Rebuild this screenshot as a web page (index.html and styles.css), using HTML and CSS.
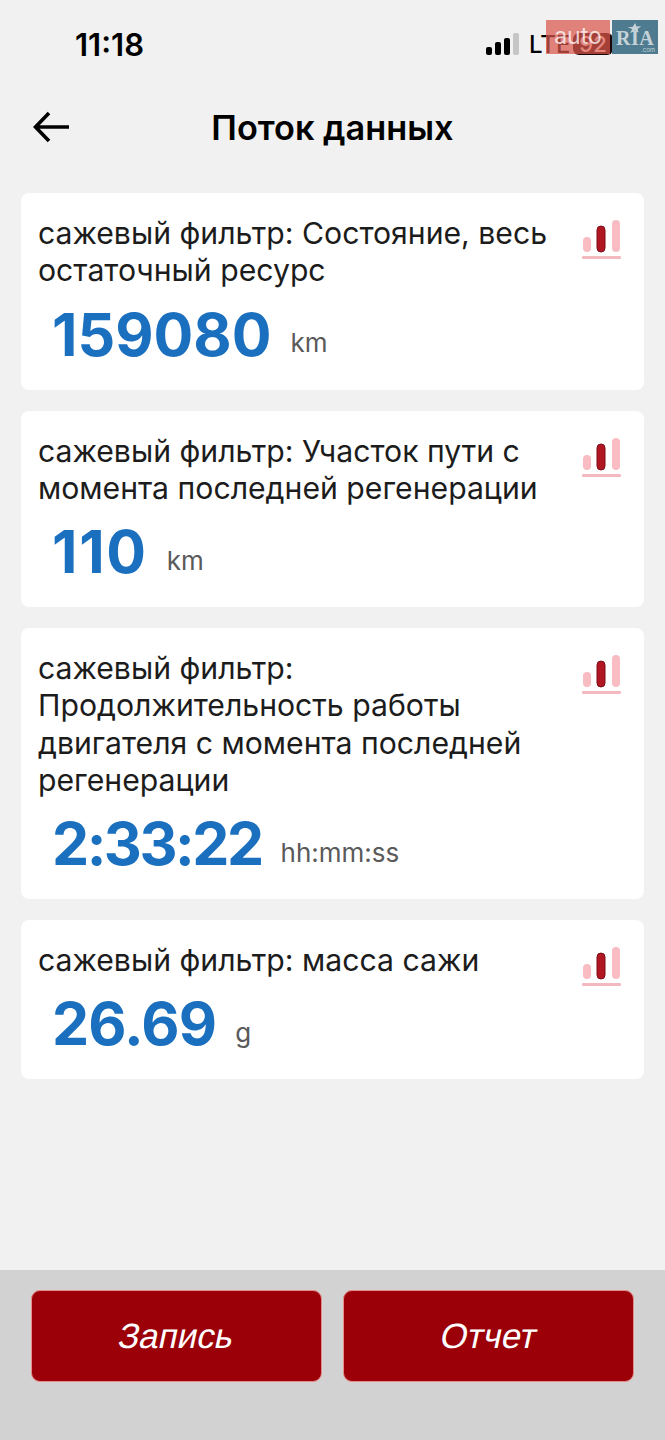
FILE: index.html
```html
<!DOCTYPE html>
<html lang="en">
<head>
    <meta charset="UTF-8">
    <title>Поток данных</title>
    <link rel="stylesheet" href="styles.css">
</head>
<body>
    <div class="page">
        <!-- Status bar -->
        <div class="status">
            <span class="time">11:18</span>
            <div class="status-right">
                <svg class="signal" width="34" height="22" viewBox="0 0 34 22">
                    <rect x="0" y="14" width="6" height="8" rx="2" fill="#000"/>
                    <rect x="9" y="9" width="6" height="13" rx="2" fill="#000"/>
                    <rect x="18" y="5" width="6" height="17" rx="2" fill="#000"/>
                    <rect x="27" y="0" width="6" height="22" rx="2" fill="#c6c6c6"/>
                </svg>
                <span class="lte">LTE</span>
                <span class="battery">92</span>
            </div>
        </div>

        <!-- Watermark -->
        <div class="watermark">
            <div class="wm-auto">auto</div>
            <div class="wm-ria">
                <svg class="wm-star" width="15" height="11" viewBox="0 0 18 14">
                    <path d="M10 0l1.500 4.500 6-.5-4.500 3.500 1 5-4.500-3-6 3.500 2.500-5.500L0 5l6.500 0z" fill="#c4d2d8"/>
                </svg>
                <span class="wm-ria-text">RIA</span>
                <span class="wm-com">.com</span>
            </div>
        </div>

        <!-- Header -->
        <div class="header">
            <svg class="back" width="38" height="32" viewBox="0 0 38 32">
                <path d="M36 16H3M16 2L2.500 16 16 30" fill="none" stroke="#000" stroke-width="3.600"/>
            </svg>
            <h1>Поток данных</h1>
        </div>

        <!-- Data cards -->
        <div class="cards">
            <div class="card">
                <div class="card-top">
                    <div class="card-title">сажевый фильтр: Состояние, весь остаточный ресурс</div>
                    <svg class="chart" width="40" height="40" viewBox="0 0 40 40">
                        <rect x="2" y="17" width="8" height="15" rx="4" fill="#f8bcc2"/>
                        <rect x="16" y="6" width="8" height="26" rx="4" fill="#b01722" stroke="#7d0d15"/>
                        <rect x="31" y="0" width="8" height="32" rx="4" fill="#f8bcc2"/>
                        <rect x="1" y="36" width="39" height="3" rx="1" fill="#f3b8c0"/>
                    </svg>
                </div>
                <div class="reading">
                    <span class="value">159080</span>
                    <span class="unit">km</span>
                </div>
            </div>
            <div class="card">
                <div class="card-top">
                    <div class="card-title">сажевый фильтр: Участок пути с момента последней регенерации</div>
                    <svg class="chart" width="40" height="40" viewBox="0 0 40 40">
                        <rect x="2" y="17" width="8" height="15" rx="4" fill="#f8bcc2"/>
                        <rect x="16" y="6" width="8" height="26" rx="4" fill="#b01722" stroke="#7d0d15"/>
                        <rect x="31" y="0" width="8" height="32" rx="4" fill="#f8bcc2"/>
                        <rect x="1" y="36" width="39" height="3" rx="1" fill="#f3b8c0"/>
                    </svg>
                </div>
                <div class="reading">
                    <span class="value value-trip">110</span>
                    <span class="unit">km</span>
                </div>
            </div>
            <div class="card">
                <div class="card-top">
                    <div class="card-title">сажевый фильтр: Продолжительность работы двигателя с момента последней регенерации</div>
                    <svg class="chart" width="40" height="40" viewBox="0 0 40 40">
                        <rect x="2" y="17" width="8" height="15" rx="4" fill="#f8bcc2"/>
                        <rect x="16" y="6" width="8" height="26" rx="4" fill="#b01722" stroke="#7d0d15"/>
                        <rect x="31" y="0" width="8" height="32" rx="4" fill="#f8bcc2"/>
                        <rect x="1" y="36" width="39" height="3" rx="1" fill="#f3b8c0"/>
                    </svg>
                </div>
                <div class="reading">
                    <span class="value value-time">2:33:22</span>
                    <span class="unit">hh:mm:ss</span>
                </div>
            </div>
            <div class="card">
                <div class="card-top">
                    <div class="card-title">сажевый фильтр: масса сажи</div>
                    <svg class="chart" width="40" height="40" viewBox="0 0 40 40">
                        <rect x="2" y="17" width="8" height="15" rx="4" fill="#f8bcc2"/>
                        <rect x="16" y="6" width="8" height="26" rx="4" fill="#b01722" stroke="#7d0d15"/>
                        <rect x="31" y="0" width="8" height="32" rx="4" fill="#f8bcc2"/>
                        <rect x="1" y="36" width="39" height="3" rx="1" fill="#f3b8c0"/>
                    </svg>
                </div>
                <div class="reading">
                    <span class="value value-mass">26.69</span>
                    <span class="unit">g</span>
                </div>
            </div>
        </div>

        <!-- Bottom buttons -->
        <div class="footer">
            <button class="action"><span class="action-label">Запись</span></button>
            <button class="action"><span class="action-label">Отчет</span></button>
        </div>
    </div>
</body>
</html>
```

FILE: styles.css
```css
* {
    box-sizing: border-box;
}

body {
    font-family: Inter, "Liberation Sans", sans-serif;
    margin: 0;
    padding: 0;
    background-color: #f1f1f1;
    color: #1c1c1c;
}

.page {
    position: relative;
    display: flex;
    flex-direction: column;
    height: 1440px;
    overflow: hidden;
}

/* Status bar */
.status {
    display: flex;
    justify-content: space-between;
    align-items: center;
    height: 88px;
    padding: 0 52px 0 75px;
}

.time {
    font-size: 31px;
    font-weight: 600;
    color: #000;
}

.status-right {
    display: flex;
    align-items: center;
    gap: 9px;
}

.lte {
    font-size: 24px;
    font-weight: 500;
    width: 35px;
    color: #000;
}

.battery {
    width: 40px;
    height: 22px;
    border-radius: 6px;
    background-color: #1a0606;
    color: #fff;
    font-size: 22px;
    font-weight: 500;
    text-align: center;
    line-height: 22px;
}

/* Watermark over the status bar */
.watermark {
    position: absolute;
    top: 20px;
    left: 546px;
    display: flex;
    gap: 2px;
    height: 34px;
}

.wm-auto {
    width: 64px;
    height: 34px;
    background-color: rgba(219, 88, 76, 0.72);
    color: rgba(255, 255, 255, 0.75);
    font-size: 23px;
    line-height: 33px;
    text-align: center;
}

.wm-ria {
    position: relative;
    width: 46px;
    height: 34px;
    background-color: #4e7b90;
}

.wm-star {
    position: absolute;
    top: 3px;
    left: 15px;
}

.wm-ria-text {
    position: absolute;
    top: 10px;
    left: 4px;
    font-family: "Liberation Serif", serif;
    font-weight: bold;
    font-size: 20px;
    line-height: 17px;
    letter-spacing: 0.500px;
    color: #c4d2d8;
}

.wm-com {
    position: absolute;
    right: 3px;
    bottom: 1px;
    font-size: 6px;
    line-height: 6px;
    color: #c4d2d8;
}

/* Header */
.header {
    position: relative;
    display: flex;
    justify-content: center;
    align-items: center;
    height: 78px;
    margin-bottom: 27px;
}

.header h1 {
    margin: 0;
    font-size: 34.300px;
    font-weight: 600;
    color: #000;
}

.back {
    position: absolute;
    left: 33px;
    top: 23px;
}

/* Cards */
.cards {
    display: flex;
    flex-direction: column;
    gap: 21px;
    padding: 0 21px;
    flex: 1;
}

.card {
    background-color: #fff;
    border-radius: 8px;
    padding: 22px 23px 20px 17px;
}

.card-top {
    display: flex;
    justify-content: space-between;
    align-items: flex-start;
    gap: 20px;
}

.card-title {
    font-size: 30.200px;
    line-height: 37.250px;
    color: #1c1c1c;
    max-width: 515px;
}

.chart {
    flex-shrink: 0;
    margin-top: 5px;
    margin-bottom: -10px;
}

.reading {
    display: flex;
    align-items: center;
    gap: 19px;
    padding-left: 14px;
    margin-top: 10px;
}

.value {
    font-size: 59px;
    line-height: 70px;
    font-weight: 700;
    color: #1a70bf;
}

.value-trip {
    letter-spacing: 1.700px;
}

.value-time {
    letter-spacing: -2.500px;
}

.value-mass {
    letter-spacing: -0.800px;
}

.unit {
    font-size: 26px;
    margin-top: 16px;
    color: #5a5a5a;
}

/* Footer */
.footer {
    display: flex;
    gap: 21px;
    height: 170px;
    padding: 20px 31px 0;
    background-color: #d2d2d2;
}

.action {
    flex: 1;
    height: 92px;
    border: 1px solid #e98b8b;
    border-radius: 9px;
    background-color: #9b0008;
    color: #fff;
    font-family: "Liberation Sans", Arial, sans-serif;
    font-size: 35px;
}

/* Slanted by hand: the italic face has an m-shaped т */
.action-label {
    display: inline-block;
    transform: skewX(-12deg);
}
```
